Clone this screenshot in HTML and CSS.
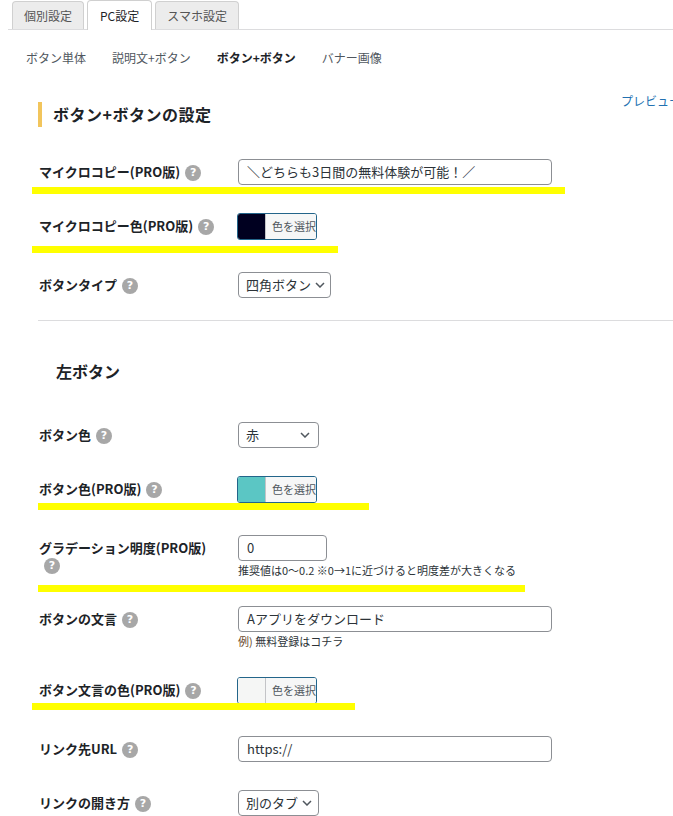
FILE: index.html
```html
<!DOCTYPE html>
<html lang="ja">
<head>
<meta charset="utf-8">
<title>PC設定</title>
<link rel="stylesheet" href="styles.css">
</head>
<body>
<div class="tabs">
  <span class="tab">個別設定</span>
  <span class="tab tab--active">PC設定</span>
  <span class="tab">スマホ設定</span>
</div>
<nav class="subnav">
  <span class="subnav-item">ボタン単体</span>
  <span class="subnav-item">説明文+ボタン</span>
  <span class="subnav-item subnav-item--current">ボタン+ボタン</span>
  <span class="subnav-item">バナー画像</span>
</nav>
<main class="panel">
  <div class="panel-head">
    <h2 class="section-title">ボタン+ボタンの設定</h2>
    <a class="preview-link">プレビュー</a>
  </div>

  <div class="form-row">
    <div class="form-label">マイクロコピー(PRO版)<span class="help">?</span></div>
    <div class="form-field"><div class="text-input">＼どちらも3日間の無料体験が可能！／</div></div>
    <span class="hl hl--a"></span>
  </div>

  <div class="form-row form-row--color">
    <div class="form-label">マイクロコピー色(PRO版)<span class="help">?</span></div>
    <div class="form-field">
      <div class="color-btn"><span class="swatch swatch--navy"></span><span class="color-btn-text">色を選択</span></div>
    </div>
    <span class="hl hl--b"></span>
  </div>

  <div class="form-row">
    <div class="form-label">ボタンタイプ<span class="help">?</span></div>
    <div class="form-field">
      <div class="select select--type"><span>四角ボタン</span><svg class="chev" viewBox="0 0 10 6" width="10" height="6"><polyline points="1,1 5,5 9,1"/></svg></div>
    </div>
  </div>

  <hr class="divider">

  <h3 class="sub-title">左ボタン</h3>

  <div class="form-row">
    <div class="form-label">ボタン色<span class="help">?</span></div>
    <div class="form-field">
      <div class="select select--short"><span>赤</span><svg class="chev" viewBox="0 0 10 6" width="10" height="6"><polyline points="1,1 5,5 9,1"/></svg></div>
    </div>
  </div>

  <div class="form-row form-row--color">
    <div class="form-label">ボタン色(PRO版)<span class="help">?</span></div>
    <div class="form-field">
      <div class="color-btn"><span class="swatch swatch--teal"></span><span class="color-btn-text">色を選択</span></div>
    </div>
    <span class="hl hl--c"></span>
  </div>

  <div class="form-row">
    <div class="form-label">グラデーション明度(PRO版)<span class="help">?</span></div>
    <div class="form-field">
      <div class="text-input text-input--num">0</div>
      <p class="hint">推奨値は0〜0.2 ※0→1に近づけると明度差が大きくなる</p>
    </div>
    <span class="hl hl--d"></span>
  </div>

  <div class="form-row">
    <div class="form-label">ボタンの文言<span class="help">?</span></div>
    <div class="form-field">
      <div class="text-input">Aアプリをダウンロード</div>
      <p class="hint"><span class="hint-ex">例)</span> 無料登録はコチラ</p>
    </div>
  </div>

  <div class="form-row form-row--color">
    <div class="form-label">ボタン文言の色(PRO版)<span class="help">?</span></div>
    <div class="form-field">
      <div class="color-btn"><span class="swatch swatch--light"></span><span class="color-btn-text">色を選択</span></div>
    </div>
    <span class="hl hl--e"></span>
  </div>

  <div class="form-row">
    <div class="form-label">リンク先URL<span class="help">?</span></div>
    <div class="form-field"><div class="text-input">https://</div></div>
  </div>

  <div class="form-row">
    <div class="form-label">リンクの開き方<span class="help">?</span></div>
    <div class="form-field">
      <div class="select select--short"><span>別のタブ</span><svg class="chev" viewBox="0 0 10 6" width="10" height="6"><polyline points="1,1 5,5 9,1"/></svg></div>
    </div>
  </div>
</main>
</body>
</html>
```

FILE: styles.css
```css
* { box-sizing: border-box; }
html, body { margin: 0; padding: 0; }
body {
  width: 673px;
  height: 816px;
  overflow: hidden;
  background: #fff;
  color: #1d2327;
  font-family: "Noto Sans CJK JP", "Noto Sans", sans-serif;
}

/* tabs */
.tabs {
  display: flex;
  align-items: flex-end;
  gap: 3px;
  height: 30px;
  margin-left: 8px;
  padding-left: 4px;
  border-bottom: 1px solid #dcdcde;
}
.tab {
  height: 28px;
  padding: 0 11px;
  border: 1px solid #d0d0d0;
  border-bottom: none;
  border-radius: 4px 4px 0 0;
  background: #ececec;
  color: #555;
  font-size: 12px;
  line-height: 27px;
  white-space: nowrap;
}
.tab--active {
  height: 30px;
  margin-bottom: -1px;
  padding: 0 12px;
  background: #fff;
  color: #1d2327;
  line-height: 29px;
}

/* sub navigation */
.subnav {
  display: flex;
  gap: 26px;
  padding: 18px 0 0 26px;
}
.subnav-item {
  font-size: 12px;
  line-height: 20px;
  color: #50575e;
  white-space: nowrap;
}
.subnav-item--current {
  font-weight: bold;
  color: #1d2327;
}

/* panel */
.panel {
  padding: 25px 0 0 38px;
}
.panel-head {
  display: flex;
  align-items: flex-start;
  margin-bottom: 18px;
}
.section-title {
  margin: 9px 0 0;
  padding-left: 11px;
  border-left: 4px solid #f2c55c;
  font-size: 16px;
  line-height: 25px;
  font-weight: bold;
  letter-spacing: 0.5px;
  color: #1d2327;
}
.preview-link {
  margin-left: auto;
  margin-right: -8px;
  font-size: 12px;
  line-height: 16px;
  color: #2271b1;
  white-space: nowrap;
}

/* form rows */
.form-row {
  position: relative;
  display: flex;
  align-items: flex-start;
  padding: 14px 0;
}
.form-row--color {
  padding-bottom: 18px;
}
.form-label {
  flex: 0 0 200px;
  padding: 4px 17px 0 1px;
  font-size: 13px;
  line-height: 17px;
  font-weight: bold;
  color: #1d2327;
}
.form-field {
  flex: 1;
}
.help {
  display: inline-flex;
  align-items: center;
  justify-content: center;
  width: 16px;
  height: 16px;
  margin-left: 5px;
  border-radius: 50%;
  background: #a7a7a7;
  color: #fff;
  font-family: "DejaVu Sans", sans-serif;
  font-size: 11px;
  font-weight: bold;
  line-height: 16px;
  vertical-align: 1px;
}

.text-input {
  width: 314px;
  height: 26px;
  padding: 0 8px;
  border: 1px solid #8c8f94;
  border-radius: 4px;
  font-size: 13px;
  line-height: 24px;
  color: #2c3338;
  white-space: nowrap;
}
.text-input--num {
  width: 89px;
}

.select {
  display: flex;
  align-items: center;
  justify-content: space-between;
  gap: 4px;
  height: 26px;
  padding: 0 6px 0 7px;
  border: 1px solid #8c8f94;
  border-radius: 4px;
  font-size: 13px;
  line-height: 24px;
  color: #2c3338;
  white-space: nowrap;
}
.select--type { width: 93px; }
.select--short { width: 81px; padding-right: 8px; }
.chev {
  flex: none;
  fill: none;
  stroke: #50575e;
  stroke-width: 1.5;
}

.color-btn {
  display: flex;
  height: 27px;
  width: 80px;
  margin-left: -1px;
  border: 1px solid #23658a;
  border-radius: 3px;
  overflow: hidden;
}
.swatch {
  flex: 0 0 27px;
}
.swatch--navy { background: #000020; }
.swatch--teal { background: #5bc6c4; }
.swatch--light { background: #f5f6f5; }
.color-btn-text {
  flex: 1;
  padding-left: 6px;
  border-left: 1px solid #c3c4c7;
  background: #f6f7f7;
  font-size: 11px;
  line-height: 25px;
  color: #50575e;
  white-space: nowrap;
}

.hint {
  margin: 2px 0 0;
  font-size: 11px;
  line-height: 15px;
  color: #2c3338;
  white-space: nowrap;
}
.hint-ex { color: #6b4a2a; }

.divider {
  margin: 8px 0 0;
  border: none;
  border-top: 1px solid #dcdcde;
}
.sub-title {
  margin: 38px 0 24px;
  padding-left: 18px;
  font-size: 16px;
  line-height: 25px;
  font-weight: bold;
  color: #1d2327;
}

/* yellow highlighter marks (annotation overlay) */
.hl {
  position: absolute;
  height: 7px;
  background: #ffff00;
}
.hl--a { top: 42px; left: -6px; width: 533px; }
.hl--b { top: 47px; left: -6px; width: 306px; }
.hl--c { top: 41px; left: 0; width: 331px; }
.hl--d { top: 64px; left: 0; width: 487px; }
.hl--e { top: 40px; left: -6px; width: 323px; }
```
